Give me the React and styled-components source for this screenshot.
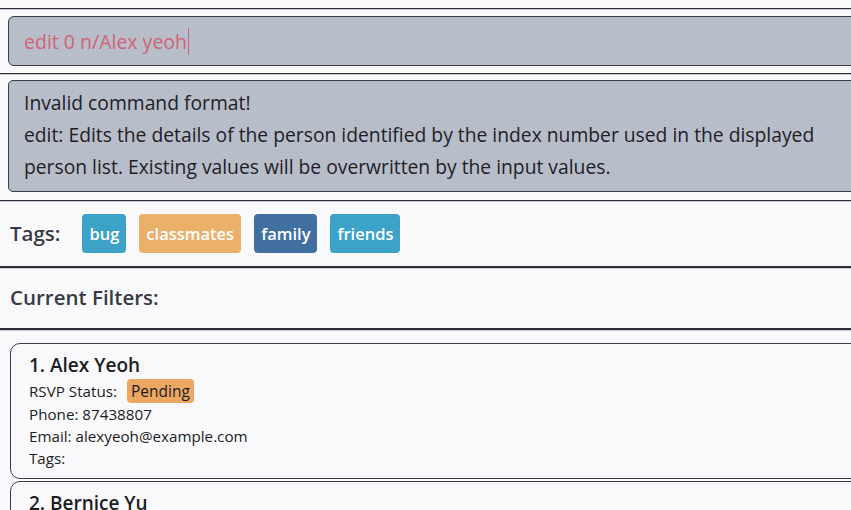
import React from "react";
import styled, { createGlobalStyle } from "styled-components";

const GlobalStyle = createGlobalStyle`
    html, body {
        margin: 0;
        padding: 0;
        background-color: #f9f9fb;
        overflow: hidden;
    }
    body {
        font-family: "Open Sans", "Noto Sans", sans-serif;
        color: #23252c;
    }
`;

const Window = styled.div`
    width: 851px;
    height: 510px;
    padding-top: 8px;
    box-sizing: border-box;
    overflow: hidden;
`;

const Pane = styled.div`
    border-top: ${props => props.topWidth || 1}px solid #2b2e37;
    box-shadow: inset 0 1px 0 #c4c8d0;
    padding: ${props => props.pad || "0"};
    height: ${props => props.h ? props.h + "px" : "auto"};
    box-sizing: border-box;
    display: flex;
    align-items: ${props => props.center ? "center" : "stretch"};
    flex-direction: ${props => props.center ? "row" : "column"};
`;

const CommandBox = styled.div`
    height: 50px;
    box-sizing: border-box;
    margin-right: -20px;
    background-color: #b8bec9;
    border: 1.5px solid #3a3d46;
    border-radius: 6px;
    padding-left: 15px;
    display: flex;
    align-items: center;
    font-size: 19.5px;
    font-weight: 400;
    color: #cf6378;
`;

const Caret = styled.span`
    display: inline-block;
    width: 1px;
    height: 27px;
    margin-left: 1px;
    background-color: #cf6378;
`;

const ResultBox = styled.div`
    height: 112px;
    box-sizing: border-box;
    margin-right: -20px;
    background-color: #b8bec9;
    border: 1.5px solid #3a3d46;
    border-radius: 5px;
    padding: 6px 0 0 15px;
    font-size: 19.3px;
    font-weight: 400;
    line-height: 32px;
    color: #1f2027;
`;

const ResultText = styled.div`
    width: 815px;
`;

const Label = styled.div`
    font-size: 20.5px;
    font-weight: 600;
    color: #373a45;
    margin-right: ${props => props.gap || 0}px;
    padding-bottom: 2px;
`;

const TagRow = styled.div`
    display: flex;
    gap: 13px;
    padding-bottom: 1px;
`;

const Chip = styled.div`
    height: 39px;
    box-sizing: border-box;
    padding: 0 7px;
    display: flex;
    align-items: center;
    border-radius: 4px;
    background-color: ${props => props.bg};
    color: #ffffff;
    font-size: 16.5px;
    font-weight: 600;
`;

const Card = styled.div`
    border: 1px solid #3a3d46;
    border-radius: 10px;
    margin-right: -20px;
    padding: 7px 0 0 18px;
    height: ${props => props.h}px;
    box-sizing: border-box;
    margin-bottom: 2px;
    background-color: #f9f9fb;
`;

const Name = styled.div`
    font-size: 19px;
    font-weight: 600;
    line-height: 28px;
    color: #1c1d22;
`;

const Field = styled.div`
    font-size: 15.2px;
    line-height: 22px;
    color: #1c1d22;
    display: flex;
    align-items: center;
`;

const Status = styled.span`
    background-color: #eca862;
    border-radius: 4px;
    padding: 0 4px;
    margin-left: 10px;
    font-size: 15.5px;
    line-height: 24px;
    color: #1c1d22;
`;

const tags = [
    { name: "bug", bg: "#3ca2c8" },
    { name: "classmates", bg: "#ebb069" },
    { name: "family", bg: "#4170a0" },
    { name: "friends", bg: "#3ca2c8" },
];

export default function App() {
    return (
        <Window>
            <GlobalStyle />
            <Pane pad="7px 0 0 8px" h={65}>
                <CommandBox>
                    edit 0 n/Alex yeoh<Caret />
                </CommandBox>
            </Pane>
            <Pane pad="6px 0 0 8px" h={127}>
                <ResultBox>
                    <ResultText>
                        Invalid command format!<br />
                        edit: Edits the details of the person identified by the index number used in the displayed person list. Existing values will be overwritten by the input values.
                    </ResultText>
                </ResultBox>
            </Pane>
            <Pane pad="0 0 0 10px" h={66} center>
                <Label gap={22}>Tags:</Label>
                <TagRow>
                    {tags.map(t => (
                        <Chip key={t.name} bg={t.bg}>{t.name}</Chip>
                    ))}
                </TagRow>
            </Pane>
            <Pane pad="0 0 0 10px" topWidth={2} h={62} center>
                <Label>Current Filters:</Label>
            </Pane>
            <Pane pad="13px 0 0 10px" topWidth={2}>
                <Card h={136}>
                    <Name>1. Alex Yeoh</Name>
                    <Field>RSVP Status: <Status>Pending</Status></Field>
                    <Field>Phone: 87438807</Field>
                    <Field>Email: alexyeoh@example.com</Field>
                    <Field>Tags:</Field>
                </Card>
                <Card h={136}>
                    <Name>2. Bernice Yu</Name>
                </Card>
            </Pane>
        </Window>
    );
}
